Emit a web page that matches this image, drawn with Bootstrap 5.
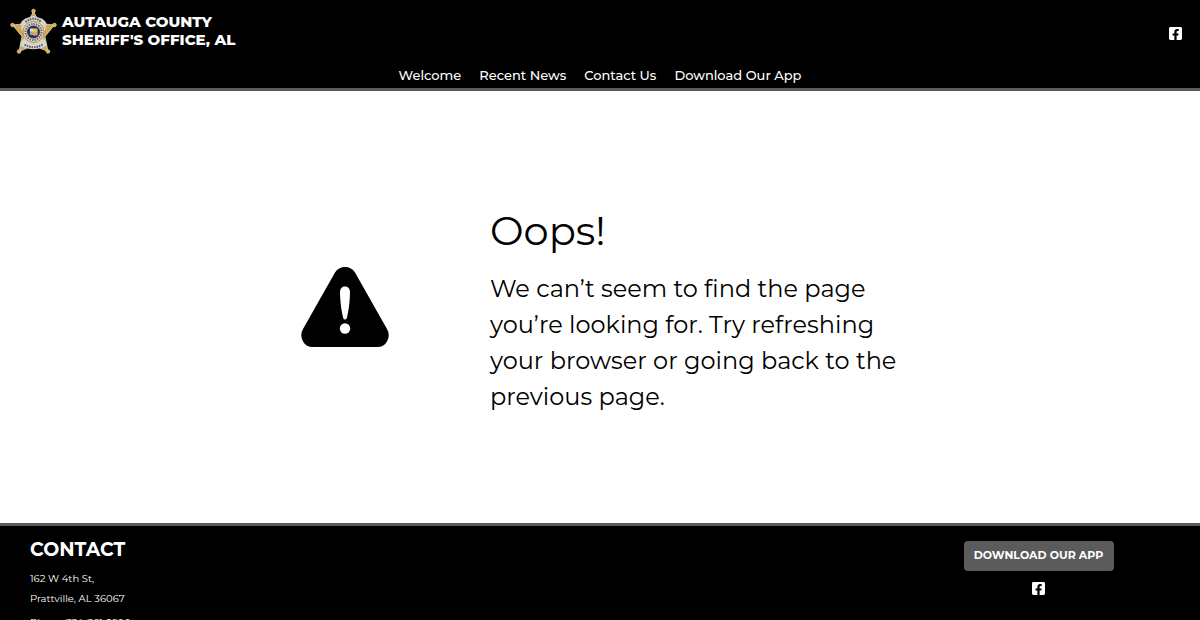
<!DOCTYPE html>
<html lang="en">
<head>
<meta charset="utf-8">
<meta name="viewport" content="width=device-width, initial-scale=1">
<title>Autauga County Sheriff's Office, AL</title>
<link href="https://cdn.jsdelivr.net/npm/bootstrap@5.3.0/dist/css/bootstrap.min.css" rel="stylesheet">
<style>
  body { font-family: Montserrat, Inter, sans-serif; color: #000; background: #fff; }
  .site-header { background: #000; border-bottom: 3px solid #5b5b5b; }
  .brand-row { padding: 8px 18px 0 10px; min-height: 63px; }
  .brand-link { gap: 5px; color: #fff; font-size: 15px; line-height: 18px; font-weight: 800; }
  .brand-name { padding-bottom: 2px; }
  .social-top { padding-top: 19px; }
  .main-nav { gap: 18px; padding-bottom: 1px; }
  .main-nav .nav-link { padding: 0; color: #fff; font-size: 13px; line-height: 24px; font-weight: 500; }
  .error-area { padding: 108px 16px; }
  .error-box { max-width: 602px; gap: 100px; padding-left: 1px; }
  .error-copy { padding-top: 4px; }
  .error-title { font-size: 40px; line-height: 56px; font-weight: 400; margin: 0 0 12px; }
  .error-text { font-size: 24px; line-height: 36px; margin: 0; }
  .site-footer { background: #000; color: #fff; border-top: 3px solid #5b5b5b; padding: 12px 30px 24px; }
  .contact-title { font-size: 19px; line-height: 24px; font-weight: 700; margin: 0 0 7px; }
  .contact-text { font-size: 10px; line-height: 20px; margin: 0 0 4px; }
  .app-side { width: 263px; gap: 11px; padding: 3px 0 0; }
  .app-btn { background: #5b5b5b; color: #fff; border-radius: 4px; width: 150px; padding: 4px 0 6px; font-size: 11px; line-height: 20px; font-weight: 700; white-space: nowrap; }
</style>
</head>
<body>
<svg width="0" height="0" class="d-none" aria-hidden="true">
  <symbol id="facebook" viewBox="0 0 448 448">
    <path fill="#fff" d="M400 0H48A48 48 0 0 0 0 48v352a48 48 0 0 0 48 48h137V296h-63v-72h63v-55c0-62 37-96 93-96 27 0 56 5 56 5v61h-31c-31 0-41 19-41 39v46h69l-11 72h-58v152h138a48 48 0 0 0 48-48V48a48 48 0 0 0-48-48z"/>
  </symbol>
</svg>

<header class="site-header">
  <div class="brand-row d-flex justify-content-between align-items-start">
    <a class="brand-link d-flex align-items-center text-decoration-none" href="#">
      <svg width="47" height="47" viewBox="0 0 94 94" aria-hidden="true">
        <g fill="#c9a75c" stroke="#eedcaa" stroke-width="1.5" stroke-linejoin="round">
          <path d="M47 7 60 31 89 34 70 57 76 87 47 75 18 87 24 57 5 34 34 31z"/>
          <circle cx="47" cy="6" r="3.5"/><circle cx="89" cy="34" r="3.5"/><circle cx="76" cy="87" r="3.5"/><circle cx="18" cy="87" r="3.5"/><circle cx="5" cy="34" r="3.5"/>
        </g>
        <path d="M47 16 55 34 73 38 65 55 69 76 47 68 25 76 29 55 21 38 39 34z" fill="#e5d4a0"/>
        <path d="M20 34Q23 22 37 19 47 13 57 19 71 22 74 34L64 40Q47 24 30 40z" fill="#d3d3d3"/>
        <path d="M20 75 25 62Q47 79 69 62L74 75Q47 90 20 75z" fill="#d6d6d6"/>
        <g fill="none" stroke="#59595f" stroke-width="4">
          <path d="M31 28Q47 15 63 28" stroke-dasharray="3 2"/><path d="M29 73Q47 84 65 73" stroke-dasharray="3 2"/>
        </g>
        <circle cx="47" cy="48" r="21" fill="#ddd6c5" stroke="#b69345" stroke-width="2"/>
        <circle cx="47" cy="48" r="16" fill="none" stroke="#6b6a70" stroke-width="4" stroke-dasharray="3 2"/>
        <circle cx="47" cy="48" r="13" fill="#28345e"/>
        <path d="M40 42h7v12h-7z" fill="#a9a766"/><path d="M46 41h9v7h-9z" fill="#e8c44e"/><path d="M46 48h9v7h-9z" fill="#e3a06c"/><path d="M40 41h6v6h-6z" fill="#e4dbe6"/>
      </svg>
      <span class="brand-name">AUTAUGA COUNTY<br>SHERIFF'S OFFICE, AL</span>
    </a>
    <a href="#" class="social-top d-flex" aria-label="Facebook"><svg width="13" height="13"><use href="#facebook"/></svg></a>
  </div>
  <nav class="main-nav nav justify-content-center" aria-label="Main">
    <a class="nav-link" href="#">Welcome</a>
    <a class="nav-link" href="#">Recent News</a>
    <a class="nav-link" href="#">Contact Us</a>
    <a class="nav-link" href="#">Download Our App</a>
  </nav>
</header>

<main class="error-area">
  <div class="error-box mx-auto d-flex align-items-center">
    <svg class="flex-shrink-0" width="90" height="82" viewBox="0 0 90 82" role="img" aria-label="Warning">
      <path d="M35 6.5Q38.500 1 45 1T55 6.500L87 63Q90.500 69 87 75.500 84 81 77 81H13Q6 81 3 75.500-.5 69 3 63z" fill="#000"/>
      <path d="M45 20.500c3.500 0 5 2.500 5 6-.1 9-1.500 19-3.200 25.500Q46.400 53.500 45 53.500T43.200 52C41.500 45.500 40.100 35.500 40 26.500c0-3.500 1.500-6 5-6z" fill="#fff"/>
      <circle cx="45" cy="62.500" r="5.200" fill="#fff"/>
    </svg>
    <div class="error-copy">
      <h1 class="error-title">Oops!</h1>
      <p class="error-text">We can’t seem to find the page you’re looking for. Try refreshing your browser or going back to the previous page.</p>
    </div>
  </div>
</main>

<footer class="site-footer d-flex justify-content-between align-items-start">
  <div>
    <h2 class="contact-title">CONTACT</h2>
    <p class="contact-text">162 W 4th St,<br>Prattville, AL 36067</p>
    <p class="contact-text">Phone 334-361-2500</p>
  </div>
  <div class="app-side d-flex flex-column align-items-center">
    <button type="button" class="btn border-0 app-btn">DOWNLOAD OUR APP</button>
    <a href="#" class="d-flex" aria-label="Facebook"><svg width="13" height="13"><use href="#facebook"/></svg></a>
  </div>
</footer>
<script src="https://cdn.jsdelivr.net/npm/bootstrap@5.3.0/dist/js/bootstrap.bundle.min.js"></script>
</body>
</html>
